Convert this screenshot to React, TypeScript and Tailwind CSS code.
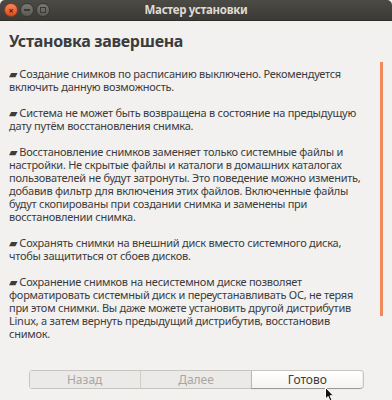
export default function App() {
  const paragraphs: string[][] = [
    ["▰ Создание снимков по расписанию выключено. Рекомендуется", "включить данную возможность."],
    ["▰ Система не может быть возвращена в состояние на предыдущую", "дату путём восстановления снимка."],
    [
      "▰ Восстановление снимков заменяет только системные файлы и",
      "настройки. Не скрытые файлы и каталоги в домашних каталогах",
      "пользователей не будут затронуты. Это поведение можно изменить,",
      "добавив фильтр для включения этих файлов. Включенные файлы",
      "будут скопированы при создании снимка и заменены при",
      "восстановлении снимка.",
    ],
    ["▰ Сохранять снимки на внешний диск вместо системного диска,", "чтобы защититься от сбоев дисков."],
    [
      "▰ Сохранение снимков на несистемном диске позволяет",
      "форматировать системный диск и переустанавливать ОС, не теряя",
      "при этом снимки. Вы даже можете установить другой дистрибутив",
      "Linux, а затем вернуть предыдущий дистрибутив, восстановив",
      "снимок.",
    ],
  ];

  return (
    <div className="relative w-[392px] h-[400px] flex flex-col bg-[#f2f1f0] overflow-hidden font-['Noto_Sans',sans-serif] text-[#3c3c3c]">
      {/* TITLE BAR */}
      <div className="relative h-[21px] flex items-center rounded-t-[5px] bg-gradient-to-b from-[#4b4a45] to-[#3b3a36] border-b border-[#2e2d2a]">
        <div className="flex items-center gap-[2px] pl-[4px]">
          <div className="w-[14px] h-[14px] rounded-full bg-gradient-to-b from-[#f6865a] to-[#df4a16] border border-[#8e3a1a] flex items-center justify-center text-[#5a1a05] text-[9px] leading-none font-bold">
            ×
          </div>
          <div className="w-[14px] h-[14px] rounded-full bg-gradient-to-b from-[#7a7974] to-[#5a5954] border border-[#37362f] flex items-center justify-center">
            <div className="w-[6px] h-[2px] bg-[#3a3935]" />
          </div>
          <div className="w-[14px] h-[14px] rounded-full bg-gradient-to-b from-[#7a7974] to-[#5a5954] border border-[#37362f] flex items-center justify-center">
            <div className="w-[6px] h-[6px] border border-[#3a3935]" />
          </div>
        </div>
        <div className="absolute inset-0 flex items-center justify-center text-[11.5px] tracking-[-0.3px] font-bold text-[#dfdbd2]">
          Мастер установки
        </div>
      </div>

      {/* HEADER */}
      <div className="pl-[9px] pt-[9px] text-[16px] tracking-[-0.3px] leading-[22px] font-bold">Установка завершена</div>

      {/* CONTENT */}
      <div className="flex mt-[15px]">
        <div className="flex-1 pl-[9px] flex flex-col gap-[13px] text-[11px] tracking-[-0.25px] leading-[13px]">
          {paragraphs.map((p, i) => (
            <div key={i}>
              {p.map((line, j) => (
                <div key={j} className="whitespace-nowrap">
                  {line}
                </div>
              ))}
            </div>
          ))}
        </div>
        <div className="w-[3px] h-[254px] -mt-[5px] mr-[9px] bg-[#f08a5d]" />
      </div>

      {/* BUTTONS */}
      <div className="mt-auto mb-[11px] flex justify-center">
        <div className="flex w-[335px] h-[19px] rounded-[3px] border border-[#c8c5c0] text-[12px]">
          <div className="flex-1 flex items-center justify-center bg-[#eceae8] text-[#a8a6a2] border-r border-[#d2cfca]">Назад</div>
          <div className="flex-1 flex items-center justify-center bg-[#eceae8] text-[#a8a6a2]">Далее</div>
          <div className="flex-1 flex items-center justify-center bg-gradient-to-b from-[#ffffff] to-[#f4f3f2] text-[#3c3c3c] border-l border-[#bdbab5] rounded-r-[3px] shadow-[0_1px_1px_rgba(0,0,0,0.25)]">
            Готово
          </div>
        </div>
      </div>

      {/* MOUSE CURSOR */}
      <svg className="absolute left-[325px] top-[387px]" width="10" height="15" viewBox="0 0 10 15">
        <path d="M0.5 0.5 L0.5 12 L3 9.5 L5 14 L7 13 L5 8.8 L8.5 8.8 Z" fill="#111" stroke="#fff" strokeWidth="1" />
      </svg>
    </div>
  );
}
